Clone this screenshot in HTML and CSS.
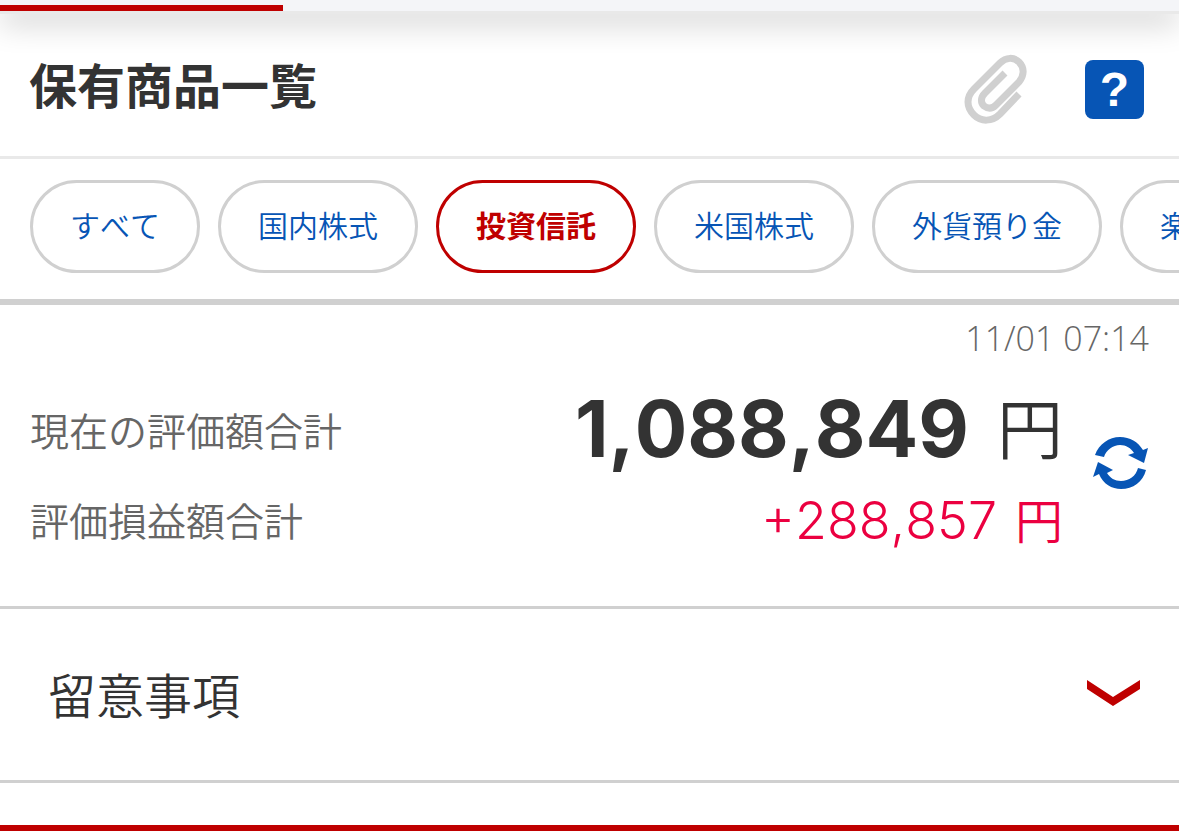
FILE: index.html
```html
<!DOCTYPE html>
<html lang="ja">
<head>
    <meta charset="UTF-8">
    <meta name="viewport" content="width=device-width, initial-scale=1.0">
    <title>保有商品一覧</title>
    <link rel="stylesheet" href="styles.css">
</head>
<body>

    <div class="top-bar">
        <div class="top-bar-active"></div>
    </div>

    <header class="page-header">
        <h1>保有商品一覧</h1>
        <button class="icon-button" type="button" aria-label="クリップ">
            <svg width="66" height="74" viewBox="0 0 66 74" fill="none" stroke="#d0d0d0" stroke-width="7">
                <path d="M56 42 L37 62 C29 70 18 70 11 63 C3 55 3 45 11 37 L37 11 C43 5 51 5 56 10 C62 16 61 24 56 30 L33 53 C29 57 25 57 21 54 C17 50 18 45 22 41 L42 21"/>
            </svg>
        </button>
        <button class="icon-button help-button" type="button" aria-label="ヘルプ">?</button>
    </header>

    <nav class="tabs">
        <a class="tab" href="#all">すべて</a>
        <a class="tab" href="#domestic">国内株式</a>
        <a class="tab active" href="#fund">投資信託</a>
        <a class="tab" href="#us">米国株式</a>
        <a class="tab" href="#foreign">外貨預り金</a>
        <a class="tab" href="#rakuten">楽</a>
    </nav>

    <!-- Totals -->
    <section class="summary">
        <time class="updated">11/01 07:14</time>
        <div class="summary-body">
            <dl class="totals">
                <dt>現在の評価額合計</dt>
                <dd class="total"><span class="number">1,088,849</span><span class="unit">円</span></dd>
                <dt>評価損益額合計</dt>
                <dd class="profit"><span class="number">+288,857</span><span class="unit">円</span></dd>
            </dl>
            <button class="icon-button refresh-button" type="button" aria-label="更新">
                <svg width="56" height="54" viewBox="0 0 56 54" fill="#0755b5">
                    <path d="M2 19 C6 8 16 1 27 1 C37 1 45 6 50 14 L55 12 L51 27 L35 19 L41 17 C38 12 33 9 27 9 C20 9 13 14 11 21 Z"/>
                    <path d="M53 34 C50 46 40 53 28 53 C19 53 10 48 6 38 L0 41 L5 26 L20 34 L14 37 C17 42 22 45 28 45 C36 45 43 40 45 32 Z"/>
                </svg>
            </button>
        </div>
    </section>

    <button class="notes" type="button">
        <span>留意事項</span>
        <svg width="53" height="27" viewBox="0 0 53 27" fill="#bf0000">
            <path d="M0 0 L26 17 L53 0 V9 L26 26 L0 9 Z"/>
        </svg>
    </button>

    <div class="bottom-line"></div>

</body>
</html>
```
FILE: styles.css
```css
* {
    box-sizing: border-box;
}

body {
    margin: 0;
    background-color: white;
    color: #333;
    font-family: "Noto Sans CJK JP", sans-serif;
    font-weight: 350;
    font-kerning: none;
    overflow-x: hidden;
}

button {
    border: 0;
    padding: 0;
    background: none;
    color: inherit;
    font: inherit;
    cursor: pointer;
}

svg {
    display: block;
}

.top-bar {
    height: 14px;
    padding-top: 5px;
    background-color: #f4f5f8;
    border-bottom: 3px solid #e9e9e9;
    box-shadow: 0 8px 30px rgba(0, 0, 0, 0.25);
}

.top-bar-active {
    width: 24%;
    height: 6px;
    background-color: #bf0000;
}

.page-header {
    display: flex;
    align-items: center;
    gap: 56px;
    height: 145px;
    padding: 8px 35px 0 29px;
    border-bottom: 3px solid #e9e9e9;
}

h1 {
    flex: 1;
    margin: 0;
    font-size: 48px;
    font-weight: 700;
    line-height: 60px;
    padding-bottom: 12px;
}

.icon-button {
    flex: none;
}

.help-button {
    width: 59px;
    height: 59px;
    border-radius: 8px;
    background-color: #0755b5;
    color: white;
    font-family: "Liberation Sans", sans-serif;
    font-size: 48px;
    font-weight: 700;
    line-height: 59px;
}

.tabs {
    display: flex;
    gap: 18px;
    padding: 21px 0 26px 30px;
    border-bottom: 6px solid #d0d0d0;
    overflow: hidden;
}

.tab {
    flex: none;
    padding: 19px 37px 24px;
    border: 3px solid #d0d0d0;
    border-radius: 47px;
    color: #0755b5;
    font-size: 30px;
    line-height: 44px;
    text-decoration: none;
    white-space: nowrap;
}

.tab.active {
    border-color: #bf0000;
    color: #bf0000;
    font-weight: 700;
}

.summary {
    padding: 13px 30px 42px;
    border-bottom: 3px solid #d0d0d0;
}

.updated {
    display: block;
    color: #666;
    font-family: "Open Sans", sans-serif;
    font-size: 34px;
    font-weight: 350;
    line-height: 40px;
    text-align: right;
}

.summary-body {
    display: flex;
    align-items: flex-start;
    gap: 30px;
    padding-top: 26px;
}

.refresh-button {
    margin-top: 52px;
}

.totals {
    flex: 1;
    display: grid;
    grid-template-columns: auto 1fr;
    grid-auto-rows: 90px;
    align-items: center;
    margin: 0;
}

dt {
    color: #666;
    font-size: 39px;
    line-height: 58px;
}

dd {
    display: flex;
    align-items: center;
    justify-content: flex-end;
    margin: 0;
}

.number {
    font-family: Inter, sans-serif;
}

.total {
    gap: 28px;
    font-size: 66px;
    line-height: 90px;
}

.total .number {
    font-size: 78px;
    font-weight: 700;
}

.total .unit {
    padding-bottom: 8px;
}

.profit {
    align-items: baseline;
    gap: 18px;
    color: #eb0040;
    font-size: 48px;
    line-height: 90px;
}

.profit .number {
    font-size: 52px;
}

.notes {
    display: flex;
    align-items: center;
    justify-content: space-between;
    width: 100%;
    padding: 49px 39px 52px 48px;
    border-bottom: 3px solid #d0d0d0;
    font-size: 48px;
    line-height: 70px;
}

.bottom-line {
    margin-top: 42px;
    height: 6px;
    background-color: #bf0000;
}
```
